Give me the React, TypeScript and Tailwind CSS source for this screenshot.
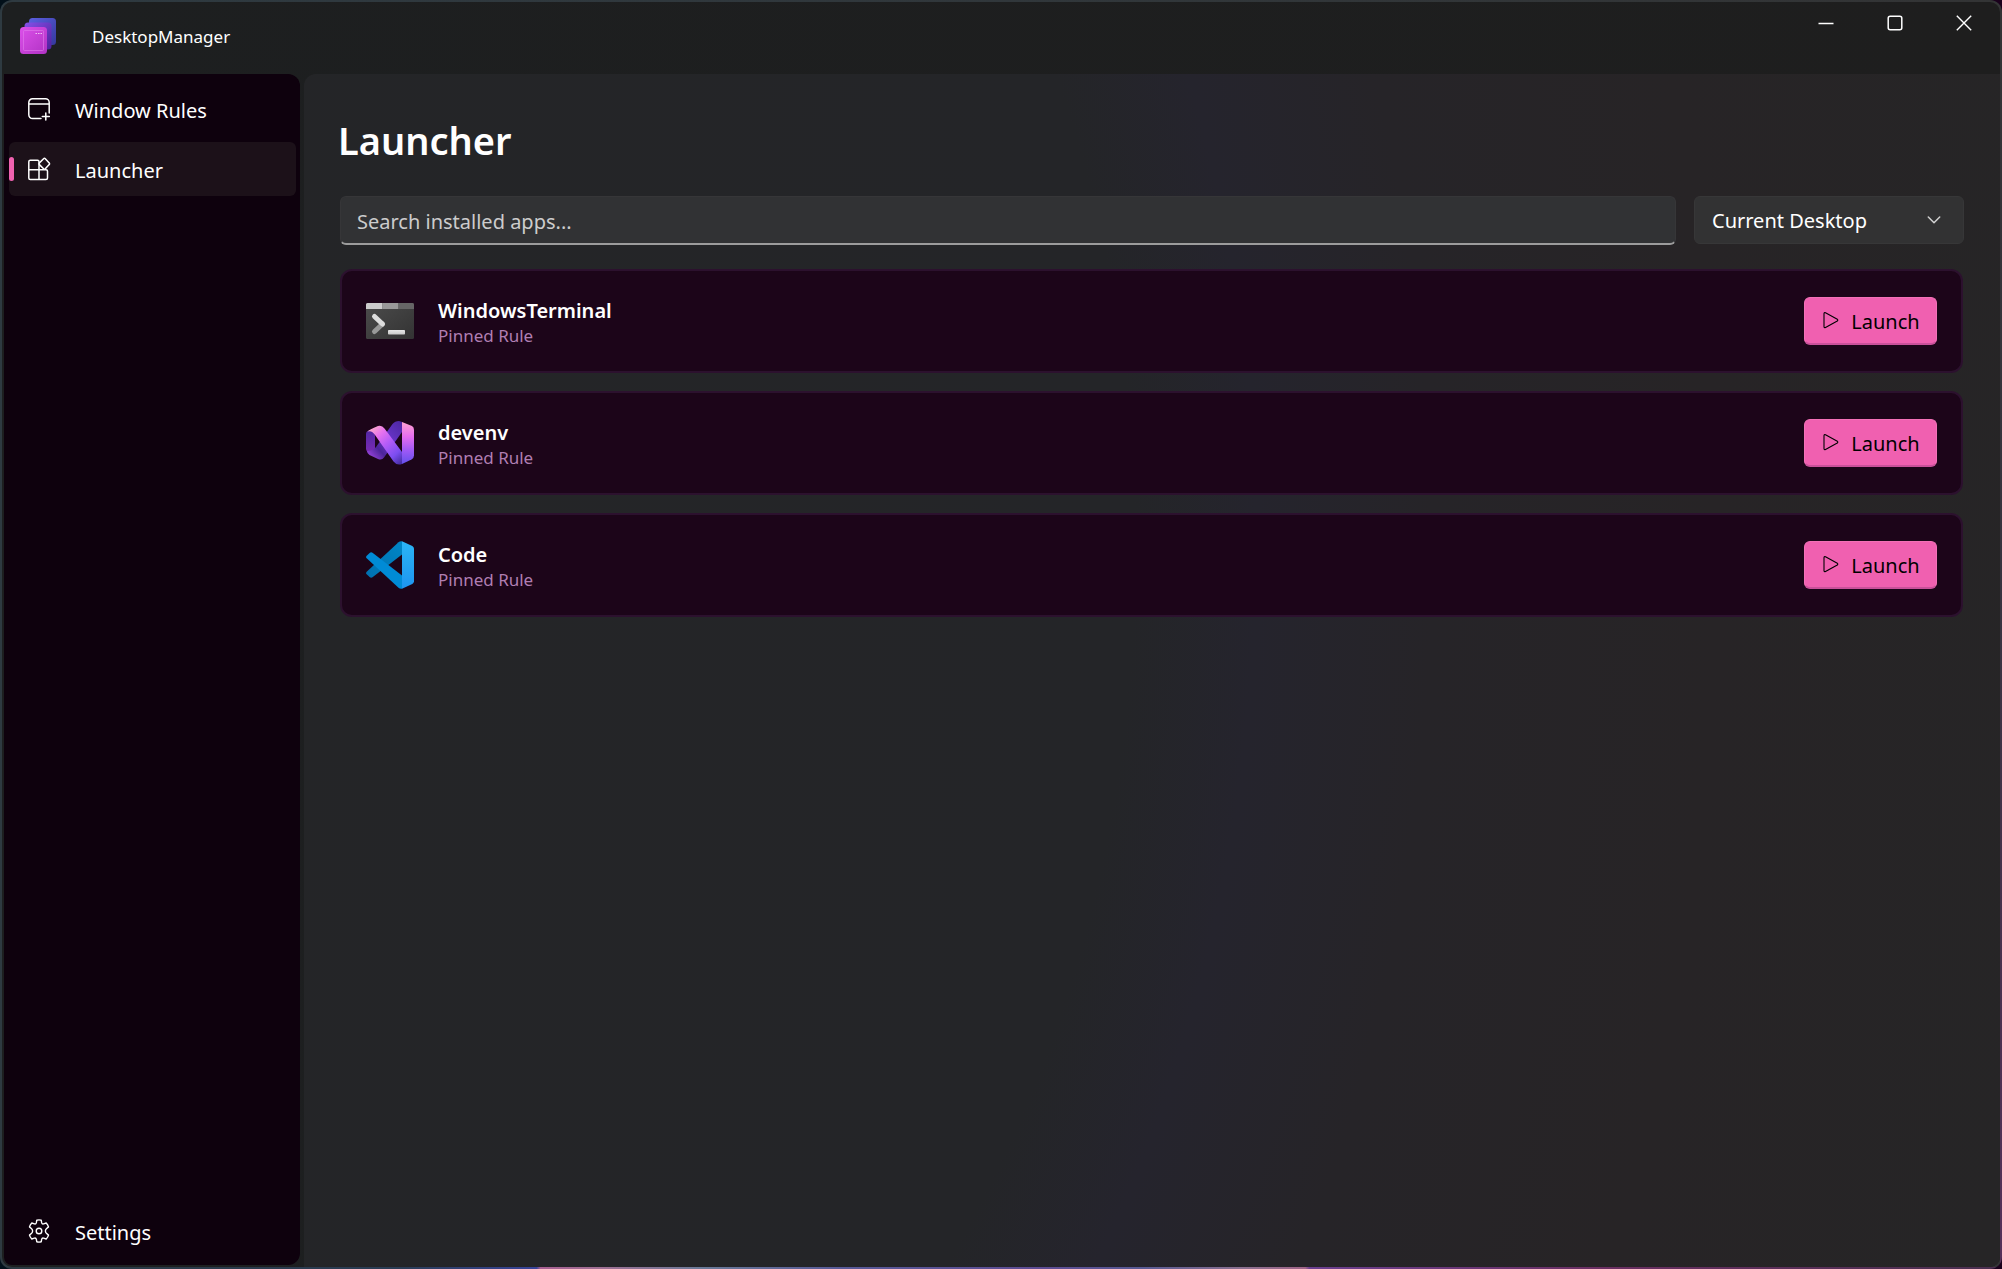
import type { ReactNode } from "react";

const TerminalIcon = () => (
	<svg viewBox="0 0 48 48" className="size-12" aria-hidden="true">
		<defs>
			<linearGradient id="term-body" x1="0" y1="0" x2="1" y2="1">
				<stop offset="0" stopColor="#4c4c4c" />
				<stop offset="1" stopColor="#333" />
			</linearGradient>
			<linearGradient id="term-fg" x1="0" y1="0" x2="0" y2="1">
				<stop offset="0" stopColor="#e8e8e8" />
				<stop offset="1" stopColor="#c8c8c8" />
			</linearGradient>
		</defs>
		<rect y="6" width="48" height="36" rx="1.5" fill="url(#term-body)" />
		<path d="M1.5 6H16.500V12H0V7.500A1.500 1.500 0 0 1 1.500 6Z" fill="#ccc" />
		<path d="M16.500 6H32.500V12H16.500Z" fill="#999" />
		<path d="M32.500 6H46.500A1.500 1.500 0 0 1 48 7.500V12H32.500Z" fill="#666" />
		<path d="M8.500 34.500L16.500 27" stroke="#999" strokeWidth="5" strokeLinecap="round" />
		<path d="M8.500 19.500L16.500 27" stroke="#dedede" strokeWidth="5" strokeLinecap="round" />
		<rect x="22" y="33" width="17" height="4.500" rx="0.800" fill="url(#term-fg)" />
	</svg>
);

const VisualStudioIcon = () => (
	<svg viewBox="0 0 48 48" className="size-12" aria-hidden="true">
		<defs>
			<linearGradient id="vs-left" x1="0" y1="0" x2="0" y2="1">
				<stop offset="0" stopColor="#5127a3" />
				<stop offset="1" stopColor="#7d2bb5" />
			</linearGradient>
			<linearGradient id="vs-back" x1="1" y1="0" x2="0" y2="1">
				<stop offset="0" stopColor="#4c27a0" />
				<stop offset="0.450" stopColor="#6a35cc" />
				<stop offset="0.700" stopColor="#4c2599" />
				<stop offset="1" stopColor="#b04df0" />
			</linearGradient>
			<linearGradient id="vs-front" x1="0.100" y1="0" x2="0.900" y2="1">
				<stop offset="0" stopColor="#ffb3c4" />
				<stop offset="0.250" stopColor="#e873ee" />
				<stop offset="0.500" stopColor="#b45cf8" />
				<stop offset="0.800" stopColor="#7b4df0" />
				<stop offset="1" stopColor="#4a2fa8" />
			</linearGradient>
			<linearGradient id="vs-right" x1="0" y1="0" x2="0" y2="1">
				<stop offset="0" stopColor="#ffa3d0" />
				<stop offset="0.350" stopColor="#e56cf0" />
				<stop offset="0.700" stopColor="#9a58f6" />
				<stop offset="1" stopColor="#6450ec" />
			</linearGradient>
		</defs>
		<path d="M0 15Q0 12 3 11.500Q9 12 9 17V35L3 34Q0 32.500 0 30Z" fill="url(#vs-left)" />
		<path d="M1 32Q7 32 10 28L26.500 5Q29 2 33 2L36 3V13L18 38.500Q16 41.500 12 40L3.500 36Q1 34.500 1 32Z" fill="url(#vs-back)" />
		<path d="M1.500 12.500Q3 10.500 12 7Q16 6 18.500 9.500L36 33V45Q31 47 27.500 42.500L9 16Q6 11 1.500 12.500Z" fill="url(#vs-front)" />
		<path d="M36 3L46 7Q48 8 48 11V36.500Q48 39 45.500 40.500L36 45Z" fill="url(#vs-right)" />
	</svg>
);

const CodeIcon = () => (
	<svg viewBox="0 0 48 48" className="size-12" aria-hidden="true">
		<defs>
			<linearGradient id="code-right" x1="0" y1="0" x2="0" y2="1">
				<stop offset="0" stopColor="#2bb5f5" />
				<stop offset="1" stopColor="#1e95f0" />
			</linearGradient>
			<linearGradient id="code-back" x1="1" y1="0" x2="0" y2="1">
				<stop offset="0" stopColor="#0086c6" />
				<stop offset="1" stopColor="#0070b0" />
			</linearGradient>
		</defs>
		<path d="M36 13.500L6.500 36.300Q5 37.300 3.600 36L.7 33.300Q-.6 32 .7 30.700L32.500 1.200Q34 0 36 .3Z" fill="url(#code-back)" />
		<path d="M36 34.500L6.500 11.700Q5 10.700 3.600 12L.7 14.700Q-.6 16 .7 17.300L32.500 46.800Q34 48 36 47.700Z" fill="#008bd6" />
		<path d="M36 .3L46.300 5Q48 6 48 7.700V40.300Q48 42 46.300 43L36 47.700Z" fill="url(#code-right)" />
	</svg>
);

const AppLogo = () => (
	<svg viewBox="0 0 36 36" className="size-9" aria-hidden="true">
		<defs>
			<linearGradient id="logo-a" x1="0" y1="0" x2="1" y2="1">
				<stop offset="0" stopColor="#5b5fe0" />
				<stop offset="1" stopColor="#35389c" />
			</linearGradient>
			<linearGradient id="logo-b" x1="0" y1="0" x2="1" y2="1">
				<stop offset="0" stopColor="#8550e8" />
				<stop offset="1" stopColor="#50209c" />
			</linearGradient>
			<linearGradient id="logo-c" x1="0" y1="0" x2="1" y2="1">
				<stop offset="0" stopColor="#dc50ea" />
				<stop offset="1" stopColor="#b133c4" />
			</linearGradient>
		</defs>
		<rect x="9" width="27" height="27" rx="3.500" fill="url(#logo-a)" />
		<rect x="4.500" y="4.500" width="27" height="27" rx="3.500" fill="url(#logo-b)" />
		<rect y="9" width="27" height="27" rx="3.500" fill="url(#logo-c)" />
		<rect x="3.500" y="12.500" width="20" height="20" rx="1" fill="none" stroke="#e07cec" strokeWidth="0.600" />
		<path d="M15.500 15.500h1.500M18 15.500h1.500M20.500 15.500h1.500" stroke="#f0c0f4" strokeWidth="1.200" />
	</svg>
);

const WindowAddIcon = () => (
	<svg viewBox="0 0 24 24" className="size-6" fill="none" stroke="currentColor" strokeWidth="1.500" strokeLinecap="round" aria-hidden="true">
		<path d="M14 21.500H5.500A3.700 3.700 0 0 1 1.800 17.800V5.500A3.700 3.700 0 0 1 5.500 1.800H18.500A3.700 3.700 0 0 1 22.200 5.500V16M1.800 7H22.200M18.800 16V23M15.300 19.500H22.300" />
	</svg>
);

const AppsIcon = () => (
	<svg viewBox="0 0 24 24" className="size-6" fill="none" stroke="currentColor" strokeWidth="1.500" strokeLinejoin="round" aria-hidden="true">
		<path d="M12 12.800V4.800A1.500 1.500 0 0 0 10.500 3.300H3.300A1.500 1.500 0 0 0 1.800 4.800V21A1.500 1.500 0 0 0 3.300 22.500H19A1.500 1.500 0 0 0 20.500 21V14.300A1.500 1.500 0 0 0 19 12.800H1.800M12 12.800V22.500" />
		<path d="M16.600 1.700L12.400 5.900A1.200 1.200 0 0 0 12.400 7.600L16.600 11.800A1.200 1.200 0 0 0 18.300 11.800L22.200 7.600A1.200 1.200 0 0 0 22.200 5.900L18.300 1.700A1.200 1.200 0 0 0 16.600 1.700Z" />
	</svg>
);

const GearIcon = () => (
	<svg viewBox="0 0 24 24" className="size-6" fill="none" stroke="currentColor" strokeWidth="1.400" strokeLinejoin="round" aria-hidden="true">
		<circle cx="12" cy="12" r="2.800" />
		<path d="M9.800 1.200Q12 .6 14.200 1.200L14.700 3.900Q15.100 5.300 16.600 4.900L19.200 4Q20.900 5.700 21.500 7.900L19.400 9.700Q18.400 10.600 18.400 12T19.400 14.300L21.500 16.100Q20.900 18.300 19.200 20L16.600 19.100Q15.100 18.700 14.700 20.100L14.200 22.800Q12 23.400 9.800 22.800L9.300 20.100Q8.900 18.700 7.400 19.100L4.800 20Q3.100 18.300 2.500 16.100L4.600 14.300Q5.600 13.400 5.600 12T4.600 9.700L2.500 7.900Q3.100 5.700 4.800 4L7.400 4.900Q8.900 5.300 9.300 3.900Z" />
	</svg>
);

const PlayIcon = () => (
	<svg viewBox="0 0 18 18" className="size-[18px]" fill="none" stroke="currentColor" strokeWidth="1.100" strokeLinejoin="round" aria-hidden="true">
		<path d="M3 1.700V14.500Q3 16.100 4.500 15.400L16.300 9Q17.300 8.100 16.300 7.200L4.500 .8Q3 .1 3 1.700Z" />
	</svg>
);

const NavItem = ({ icon, label, active = false }: { icon: ReactNode; label: string; active?: boolean }) => (
	<a
		href="#"
		aria-current={active ? "page" : undefined}
		className={
			active
				? "relative flex items-center h-[54px] gap-6 pl-[18px] rounded-md bg-[#1c1119]"
				: "relative flex items-center h-[54px] gap-6 pl-[18px] rounded-md"
		}
	>
		{active && <span className="absolute left-0 w-[5px] h-6 rounded-full bg-[#f062b0]" />}
		{icon}
		<span className="pt-1">{label}</span>
	</a>
);

const apps = [
	{ name: "WindowsTerminal", icon: <TerminalIcon /> },
	{ name: "devenv", icon: <VisualStudioIcon /> },
	{ name: "Code", icon: <CodeIcon /> },
];

const App = () => {
	return (
		<div className="h-screen overflow-hidden bg-[linear-gradient(90deg,#02101a,#000_50%,#1a001c)] font-['Noto_Sans',sans-serif] text-xl leading-7 text-white">
			<div className="h-full p-0.5 rounded-xl bg-[linear-gradient(90deg,#2b3840,#2b3d55_20%,#38449a_26.8%,#a85f92_27%,#a07094_30%,#6a7a98_35%,#585a98_42%,#5e4c94_52%,#585a94_57%,#8a7090_62%,#a06488_65.200%,#6b3f90_65.400%,#6b2f62_80%,#4a3050),linear-gradient(180deg,#333435,#36333f_45%,#55305a),linear-gradient(90deg,#2e3a41,#333435)] bg-[size:100%_2px,2px_100%,100%_100%] bg-[position:bottom,right,center] bg-no-repeat">
				<div className="flex flex-col h-full overflow-hidden rounded-[10px] bg-[linear-gradient(90deg,#1d1f20,#1e1e1e)]">
					<header className="flex justify-between h-[72px] shrink-0 pr-0.5">
						<div className="flex items-center h-[68px] pl-[18px] text-[17px] gap-9">
							<AppLogo />
							<span className="pt-0.5">DesktopManager</span>
						</div>
						<div className="flex h-[42px]">
							<button aria-label="Minimize" className="flex items-center justify-center w-[69px]">
								<svg viewBox="0 0 16 16" className="size-4" fill="none" stroke="currentColor" strokeWidth="1.500">
									<path d="M.5 8.500H15.500" />
								</svg>
							</button>
							<button aria-label="Maximize" className="flex items-center justify-center w-[69px]">
								<svg viewBox="0 0 16 16" className="size-4" fill="none" stroke="currentColor" strokeWidth="1.500">
									<rect x="1.200" y="1.200" width="13.600" height="13.600" rx="2" />
								</svg>
							</button>
							<button aria-label="Close" className="flex items-center justify-center w-[69px]">
								<svg viewBox="0 0 16 16" className="size-4" fill="none" stroke="currentColor" strokeWidth="1.400">
									<path d="M.8 .8L15.200 15.200M15.200 .8L.8 15.200" />
								</svg>
							</button>
						</div>
					</header>
					<div className="flex flex-1 min-h-0 gap-1">
						<nav className="flex flex-col justify-between w-[296px] shrink-0 ml-0.5 mb-0.5 pt-2 pb-[7px] pl-[5px] pr-1 rounded-r-xl rounded-bl-lg bg-[#0e010d]">
							<div className="flex flex-col gap-1.5">
								<NavItem icon={<WindowAddIcon />} label="Window Rules" />
								<NavItem icon={<AppsIcon />} label="Launcher" active />
							</div>
							<NavItem icon={<GearIcon />} label="Settings" />
						</nav>
						<main className="flex-1 min-w-0 px-9 pt-9 rounded-tl-xl bg-[radial-gradient(104%_200%_at_0%_40%,#242527_0%,#242528_47%,#25242d_54%,#262428_64%,#272426_80%,#262526_100%)]">
							<h1 className="-ml-0.5 text-[38px] leading-[60px] font-semibold">Launcher</h1>
							<div className="flex mt-[26px] gap-[18px]">
								<input
									type="text"
									aria-label="Search installed apps"
									placeholder="Search installed apps..."
									className="flex-1 min-w-0 h-[49px] pt-0.5 px-4 border border-[#363638] border-b-2 border-b-[#9c9c9c] rounded-md bg-[#313234] placeholder:text-[#cccccc] outline-none"
								/>
								<div className="relative w-[270px]">
									<select
										aria-label="Desktop"
										className="w-full h-12 pt-0.5 pl-[17px] pr-12 border border-[#373738] rounded-md appearance-none bg-[#323233] outline-none"
									>
										<option>Current Desktop</option>
									</select>
									<svg
										viewBox="0 0 14 8"
										className="absolute w-3.5 h-2 pointer-events-none right-[23px] top-5"
										fill="none"
										stroke="#cfcfcf"
										strokeWidth="1.500"
										strokeLinecap="round"
										strokeLinejoin="round"
										aria-hidden="true"
									>
										<path d="M1.300 1L7 6.800L12.700 1" />
									</svg>
								</div>
							</div>
							<ul className="flex flex-col mt-6 mr-px gap-[18px]">
								{apps.map((app) => (
									<li key={app.name} className="flex items-center h-[104px] px-6 border-2 border-[#2c112e] rounded-xl bg-[#1c0519]">
										{app.icon}
										<div className="flex-1 pt-1 ml-6">
											<p className="font-semibold leading-[26px]">{app.name}</p>
											<p className="text-[17px] leading-6 text-[#b07eb2]">Pinned Rule</p>
										</div>
										<button className="flex items-center justify-center w-[133px] h-12 gap-3 text-black border border-[#f371b7] border-b-2 border-b-[#c9519a] rounded-md bg-[#f060b0]">
											<PlayIcon />
											<span className="pt-0.5">Launch</span>
										</button>
									</li>
								))}
							</ul>
						</main>
					</div>
				</div>
			</div>
		</div>
	);
};

export default App;
